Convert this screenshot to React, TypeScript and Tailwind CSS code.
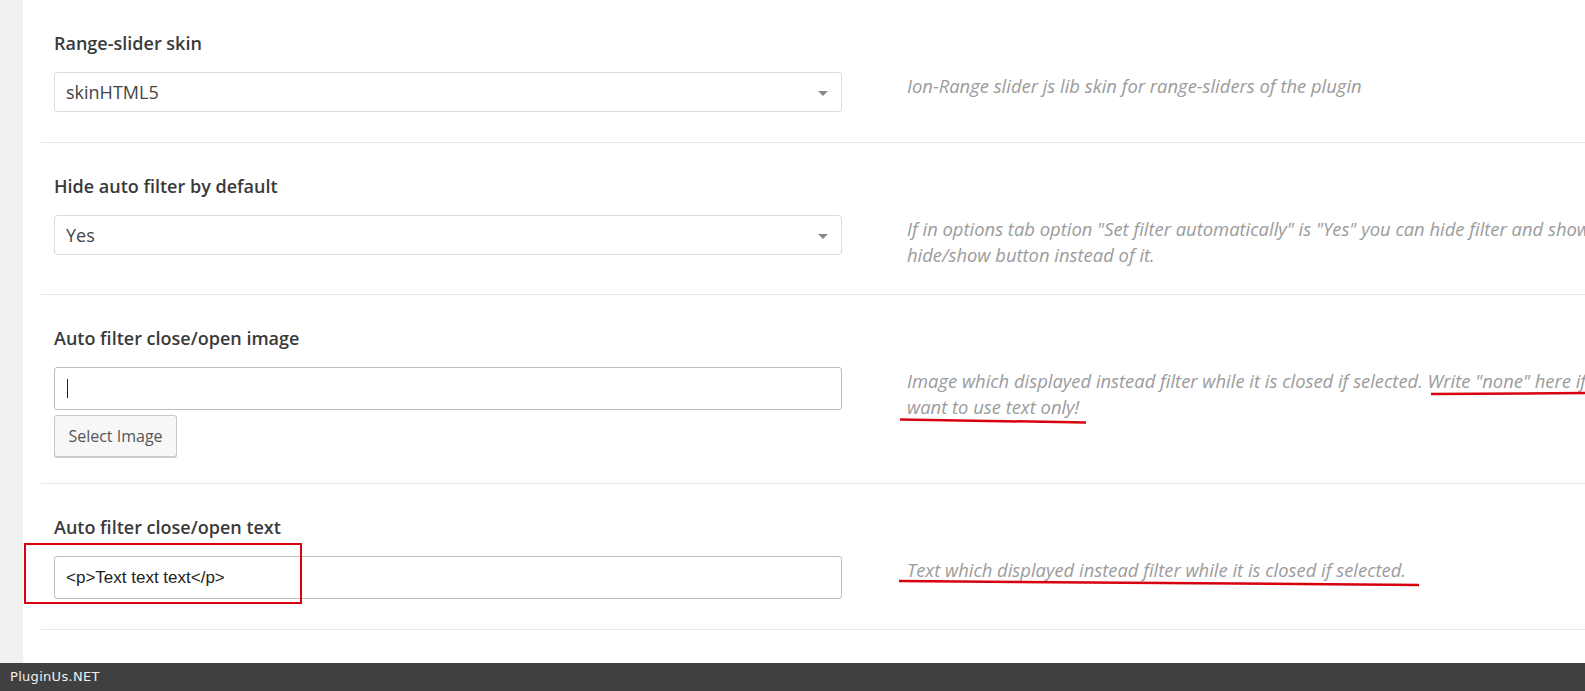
import React from 'react';

// ============================================================
// FIELD PIECES
// ============================================================
function Select({ value }: { value: string }) {
  return (
    <div className="relative mb-[4px] flex h-[40px] w-[788px] items-center rounded-[4px] border border-[#dcdcdc] bg-white pl-[11px] text-[18px] text-[#444] [font-family:'Open_Sans',sans-serif]">
      {value}
      <span className="absolute right-[13px] top-[18px] h-0 w-0 border-x-[5px] border-t-[5px] border-x-transparent border-t-[#888]" />
    </div>
  );
}

function TextInput({ value, caret }: { value?: string; caret?: boolean }) {
  return (
    <div className="mb-[4px] flex h-[43px] w-[788px] items-center rounded-[3px] border border-[#bdbdbd] bg-white pl-[11px] text-[17px] text-[#222] [font-family:'Liberation_Sans',Arial,sans-serif]">
      {value}
      {caret && <span className="ml-[1px] h-[19px] w-[1px] bg-[#222]" />}
    </div>
  );
}

function Row({
  label,
  field,
  desc,
}: {
  label: string;
  field: React.ReactNode;
  desc: React.ReactNode;
}) {
  return (
    <div className="border-b border-[#e3e8ed] pb-[26px] pl-[13px] pt-[31px]">
      <div className="mb-[17px] whitespace-nowrap text-[18px] font-semibold leading-[24px] text-[#3a3a3a] [font-family:'Open_Sans',sans-serif]">
        {label}
      </div>
      <div className="flex gap-[65px]">
        <div className="shrink-0">{field}</div>
        <div className="whitespace-nowrap pt-[1px] text-[18.4px] italic leading-[26px] text-[#9b9b9b] [font-family:'Open_Sans',sans-serif]">
          {desc}
        </div>
      </div>
    </div>
  );
}

// ============================================================
// MAIN
// ============================================================
export default function App() {
  return (
    <div className="relative flex h-screen w-full flex-col overflow-hidden bg-white">
      <div className="flex min-h-0 flex-1">
        <div className="w-[23px] shrink-0 bg-[#f1f1f1]" />
        <div className="min-w-0 flex-1 overflow-hidden pl-[18px]">
          <div className="w-[1800px]">
            <Row
              label="Range-slider skin"
              field={<Select value="skinHTML5" />}
              desc="Ion-Range slider js lib skin for range-sliders of the plugin"
            />
            <Row
              label="Hide auto filter by default"
              field={<Select value="Yes" />}
              desc={
                <>
                  If in options tab option "Set filter automatically" is "Yes" you can hide filter and show
                  <br />
                  hide/show button instead of it.
                </>
              }
            />
            <Row
              label="Auto filter close/open image"
              field={
                <>
                  <TextInput caret />
                  <button className="mt-[1px] h-[42px] w-[123px] rounded-[3px] border border-[#c8c8c8] bg-[#f7f7f7] text-[16px] text-[#555] shadow-[0_1px_0_#ccc] [font-family:'Open_Sans',sans-serif]">
                    Select Image
                  </button>
                </>
              }
              desc={
                <>
                  Image which displayed instead filter while it is closed if selected. Write "none" here if you
                  <br />
                  want to use text only!
                </>
              }
            />
            <Row
              label="Auto filter close/open text"
              field={<TextInput value="<p>Text text text</p>" />}
              desc="Text which displayed instead filter while it is closed if selected."
            />
          </div>
        </div>
      </div>

      {/* Footer */}
      <div className="flex h-[28px] shrink-0 items-center bg-[#404040] pl-[10px] text-[13px] tracking-[0.3px] text-[#f0f0f0] [font-family:'DejaVu_Sans',sans-serif]">
        PluginUs.NET
      </div>

      {/* Red annotations drawn over the page */}
      <svg
        className="pointer-events-none absolute left-0 top-0"
        width="1585"
        height="691"
        viewBox="0 0 1585 691"
      >
        <rect x="25" y="544" width="276" height="59" fill="none" stroke="#d6000f" strokeWidth="2" />
        <line x1="1431" y1="394" x2="1585" y2="393" stroke="#d6000f" strokeWidth="2.5" />
        <line x1="900" y1="419.5" x2="1086" y2="422.5" stroke="#d6000f" strokeWidth="2.5" />
        <line x1="899" y1="581" x2="1419" y2="585" stroke="#d6000f" strokeWidth="2.5" />
      </svg>
    </div>
  );
}
